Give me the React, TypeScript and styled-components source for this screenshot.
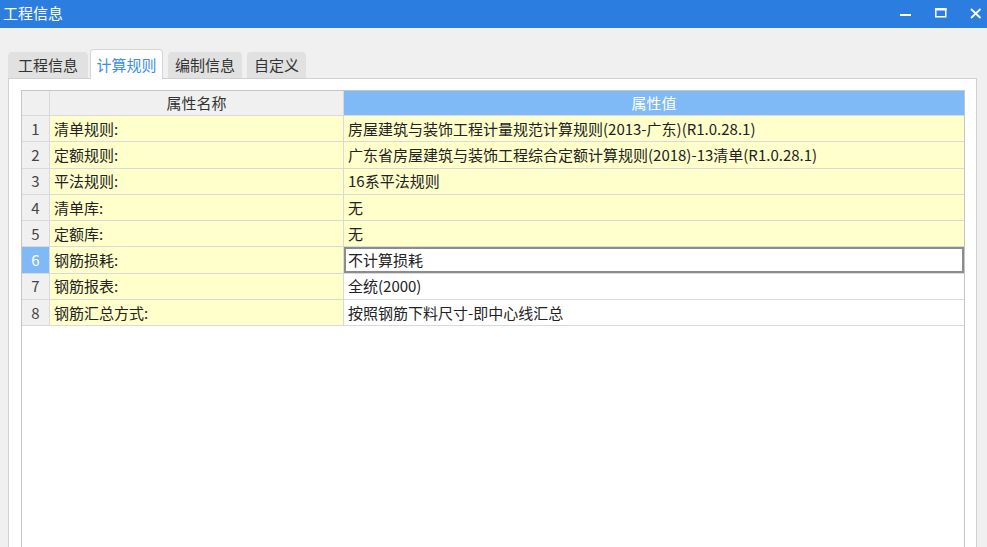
import React from "react";
import styled, { createGlobalStyle } from "styled-components";

const Global = createGlobalStyle`
  html, body { margin: 0; padding: 0; height: 100%; overflow: hidden; }
  body { font-family: "Noto Sans CJK SC", "Liberation Sans", sans-serif; background: #f0f0f0; }
  #root { height: 100%; }
`;

const Window = styled.div`
  height: 547px;
  display: flex;
  flex-direction: column;
  background: #f0f0f0;
  overflow: hidden;
`;

const TitleBar = styled.div`
  height: 28px;
  flex: none;
  background: #2b7de0;
  display: flex;
  align-items: center;
  gap: 23px;
  padding: 0 5px 0 3px;
  color: #fff;
  font-size: 15px;
`;

const Title = styled.div`
  flex: 1;
  line-height: 20px;
  margin-top: -3px;
`;

const Ctrl = styled.div`
  width: 12px;
  height: 28px;
  display: flex;
  align-items: center;
  justify-content: center;
`;

const Body = styled.div`
  flex: 1;
  display: flex;
  flex-direction: column;
  padding: 20px 10px 0 8px;
  min-height: 0;
`;

const Tabs = styled.div`
  display: flex;
  align-items: flex-end;
  height: 30px;
  flex: none;
  position: relative;
  z-index: 1;
`;

const Tab = styled.div<{ $active?: boolean; $w: number; $gap: number }>`
  width: ${(p) => p.$w}px;
  margin-left: ${(p) => p.$gap}px;
  height: ${(p) => (p.$active ? "30px" : "26px")};
  box-sizing: border-box;
  display: flex;
  align-items: center;
  justify-content: center;
  font-size: 15px;
  color: ${(p) => (p.$active ? "#3c8ee6" : "#333")};
  background: ${(p) => (p.$active ? "#ffffff" : "#e1e1e1")};
  border: ${(p) => (p.$active ? "1px solid #d4d4d4" : "none")};
  border-bottom: none;
  border-radius: 4px 4px 0 0;
  margin-bottom: ${(p) => (p.$active ? "-1px" : "0")};
  line-height: 20px;
  white-space: nowrap;
`;

const Panel = styled.div`
  flex: 1;
  background: #fff;
  border: 1px solid #d0d0d0;
  border-bottom: none;
  padding: 11px 11px 0 12px;
  display: flex;
  flex-direction: column;
  min-height: 0;
`;

const Grid = styled.div`
  flex: 1;
  border: 1px solid #c6c6c6;
  border-bottom: none;
  display: grid;
  grid-template-columns: 28px 294px 1fr;
  grid-auto-rows: 26.3px;
  grid-template-rows: 25px;
  align-content: start;
  font-size: 15px;
`;

const Cell = styled.div<{ $bg: string; $color?: string; $center?: boolean; $sel?: boolean }>`
  box-sizing: border-box;
  background: ${(p) => p.$bg};
  color: ${(p) => p.$color || "#222"};
  border-right: 1px solid #d9d9d9;
  border-bottom: 1px solid #d9d9d9;
  display: flex;
  align-items: center;
  justify-content: ${(p) => (p.$center ? "center" : "flex-start")};
  padding: ${(p) => (p.$center ? "0" : "0 4px")};
  white-space: nowrap;
  overflow: hidden;
  line-height: 20px;
  box-shadow: ${(p) => (p.$sel ? "inset 0 0 0 2px #8c8c8c" : "none")};
  &:nth-child(3n) { border-right: none; }
`;

const rows: [string, string][] = [
  ["清单规则:", "房屋建筑与装饰工程计量规范计算规则(2013-广东)(R1.0.28.1)"],
  ["定额规则:", "广东省房屋建筑与装饰工程综合定额计算规则(2018)-13清单(R1.0.28.1)"],
  ["平法规则:", "16系平法规则"],
  ["清单库:", "无"],
  ["定额库:", "无"],
  ["钢筋损耗:", "不计算损耗"],
  ["钢筋报表:", "全统(2000)"],
  ["钢筋汇总方式:", "按照钢筋下料尺寸-即中心线汇总"],
];

const tabs = [
  { label: "工程信息", w: 80, gap: 0 },
  { label: "计算规则", w: 73, gap: 2, active: true },
  { label: "编制信息", w: 74, gap: 5 },
  { label: "自定义", w: 59, gap: 5 },
];

const YELLOW = "#ffffcc";
const GREY = "#f0f0f0";
const BLUE = "#7fb9f6";

export default function App() {
  return (
    <Window>
      <Global />
      <TitleBar>
        <Title>工程信息</Title>
        <Ctrl>
          <svg width="12" height="12" viewBox="0 0 12 12">
            <rect x="0" y="6" width="11" height="2" fill="#fff" />
          </svg>
        </Ctrl>
        <Ctrl>
          <svg width="12" height="12" viewBox="0 0 12 12">
            <rect x="0.75" y="0.75" width="10" height="8" fill="none" stroke="#fff" strokeWidth="1.5" />
            <rect x="0" y="0" width="11.5" height="2.5" fill="#fff" />
          </svg>
        </Ctrl>
        <Ctrl>
          <svg width="12" height="12" viewBox="0 0 12 12">
            <path d="M1 1 L10.5 10 M10.5 1 L1 10" stroke="#fff" strokeWidth="1.8" />
          </svg>
        </Ctrl>
      </TitleBar>
      <Body>
        <Tabs>
          {tabs.map((t) => (
            <Tab key={t.label} $w={t.w} $gap={t.gap} $active={t.active}>
              {t.label}
            </Tab>
          ))}
        </Tabs>
        <Panel>
          <Grid>
            <Cell $bg={GREY} />
            <Cell $bg={GREY} $center $color="#333">属性名称</Cell>
            <Cell $bg={BLUE} $center $color="#fff">属性值</Cell>
            {rows.map(([k, v], i) => {
              const sel = i === 5;
              const valBg = i < 5 ? YELLOW : "#ffffff";
              return (
                <React.Fragment key={i}>
                  <Cell $bg={sel ? BLUE : GREY} $center $color={sel ? "#fff" : "#444"}>
                    {i + 1}
                  </Cell>
                  <Cell $bg={YELLOW}>{k}</Cell>
                  <Cell $bg={valBg} $sel={sel}>{v}</Cell>
                </React.Fragment>
              );
            })}
          </Grid>
        </Panel>
      </Body>
    </Window>
  );
}
